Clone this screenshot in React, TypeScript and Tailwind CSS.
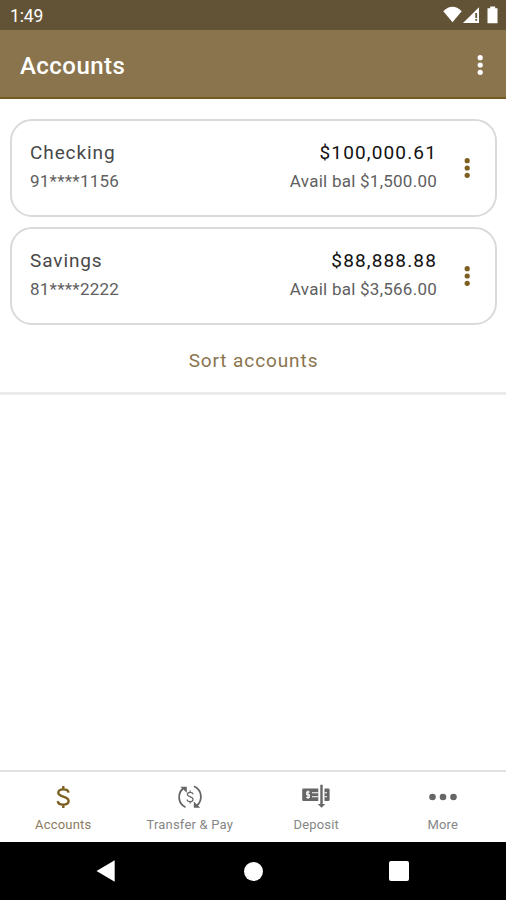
import type { ReactNode } from 'react'

interface Account {
  name: string
  number: string
  balance: string
  available: string
}

const accounts: Account[] = [
  { name: 'Checking', number: '91****1156', balance: '$100,000.61', available: '$1,500.00' },
  { name: 'Savings', number: '81****2222', balance: '$88,888.88', available: '$3,566.00' },
]

function MoreVertical() {
  return (
    <svg width="8" height="22" viewBox="0 0 8 22" fill="currentColor">
      <circle cx="4.2" cy="3.7" r="2.6" />
      <circle cx="4.2" cy="11" r="2.6" />
      <circle cx="4.2" cy="18.3" r="2.6" />
    </svg>
  )
}

function StatusBar() {
  return (
    <div className="flex h-[30px] items-center justify-between bg-[#625336] pl-[10px] pr-[7px] text-white">
      <span className="pt-[2px] text-[17.5px] leading-5 tracking-[-0.1px]">1:49</span>
      <svg width="56" height="20" viewBox="0 0 56 20" fill="currentColor">
        <path d="M0.3 6.2 Q9.5 -2.6 18.7 6.2 L9.5 17.3 Z" />
        <path d="M36 2.2 V18 H20 Z" />
        <path d="M32.3 8 h1.8 v5 h-1.8 z M32.3 14 h1.8 v1.8 h-1.8 z" fill="#625336" />
        <path d="M47.2 1.5 h5 v1.7 h2.3 v15 h-10 V3.2 h2.7 z" />
      </svg>
    </div>
  )
}

function AccountCard({ account }: { account: Account }) {
  return (
    <div className="flex h-[98px] rounded-[22px] border-2 border-[#dadada] pl-[18px] pr-6 pt-[18px]">
      <div className="flex-1">
        <p className="text-[19px] leading-7 tracking-[0.9px] text-[#484848]">{account.name}</p>
        <p className="text-[17px] leading-7 tracking-[0.25px] text-[#606060]">{account.number}</p>
      </div>
      <div className="text-right">
        <p className="text-[19px] leading-7 tracking-[1.15px] text-[#111]">{account.balance}</p>
        <p className="text-[17px] leading-7 tracking-[0.25px] text-[#606060]">Avail bal {account.available}</p>
      </div>
      <button className="ml-[26px] mt-[18px] h-[22px] text-[#7d5f20]">
        <MoreVertical />
      </button>
    </div>
  )
}

function TransferIcon() {
  return (
    <svg width="26" height="26" viewBox="0 0 26 26" fill="none" stroke="currentColor" strokeWidth="1.8">
      <path d="M8.5 23.3 C0.8 19.5 0.2 9.5 6 4.5" />
      <path d="M3.4 2.8 H9.8 V8.8 Z" fill="currentColor" stroke="none" />
      <path d="M17 2.2 C25.4 6.2 25.8 16 20 21.5" />
      <path d="M16.8 17.5 V23.8 H23.2 Z" fill="currentColor" stroke="none" />
      <path d="M16 10.3 C15.8 7.6 10.3 7.6 10.3 10.4 C10.3 13 16 12.3 16 15.4 C16 18.4 10.2 18.3 10.1 15.5 M13.1 6.5 V8.2 M13.1 17.7 V19.5" strokeWidth="1.2" />
    </svg>
  )
}

function DepositIcon() {
  return (
    <svg width="28" height="26" viewBox="0 0 28 26" fill="currentColor">
      <path d="M1.5 4.5 H16.3 V17 H1.5 Q0.2 17 0.2 15.7 V5.8 Q0.2 4.5 1.5 4.5 Z" />
      <path d="M22.5 4.5 H26.3 Q27.6 4.5 27.6 5.8 V15.7 Q27.6 17 26.3 17 H22.5 Z" />
      <path d="M7.8 8 H4.7 V10.7 H7.3 V13.5 H4.2 M6 6.6 V14.9 M10 8.7 H16.3 M10 12.8 H16.3 M22.5 8.7 H25 M22.5 12.8 H25" stroke="white" strokeWidth="1.1" fill="none" />
      <path d="M18.3 0.8 H20.7 V20 H23.2 L19.5 23.8 L15.8 20 H18.3 Z" />
    </svg>
  )
}

function NavItem({ label, active, children }: { label: string; active?: boolean; children: ReactNode }) {
  return (
    <button className={`flex flex-1 flex-col items-center pt-3 ${active ? 'text-[#7d5f20]' : 'text-[#666]'}`}>
      <span className="flex h-[26px] items-center">{children}</span>
      <span className={`mt-[7px] text-[13px] leading-4 tracking-[0.2px] ${active ? 'text-[#8b7b60]' : 'text-[#868686]'}`}>
        {label}
      </span>
    </button>
  )
}

export default function App() {
  return (
    <div className="flex h-[900px] w-full flex-col bg-white font-['Roboto',sans-serif]">
      <StatusBar />
      <header className="flex h-[69px] items-center justify-between border-b-2 border-[#745b20] bg-[#8a744e] pl-5 pr-[22px] pt-[2px] text-white">
        <h1 className="pt-[2px] text-2xl font-medium tracking-[0.45px]">Accounts</h1>
        <MoreVertical />
      </header>

      <main className="flex-1">
        <section className="h-[296px] border-b-[3px] border-[#ebebeb] pl-[10px] pr-[9px] pt-5">
          <div className="flex flex-col gap-[10px]">
            {accounts.map((account) => (
              <AccountCard key={account.name} account={account} />
            ))}
          </div>
          <button className="mt-[22px] w-full text-center text-[19px] leading-7 tracking-[0.9px] text-[#8a744e]">
            Sort accounts
          </button>
        </section>
      </main>

      <nav className="flex h-[72px] border-t-2 border-[#e2e2e2]">
        <NavItem label="Accounts" active>
          <svg width="14" height="24" viewBox="0 0 14 24" fill="none" stroke="currentColor" strokeWidth="2.4">
            <path d="M12.5 7.7 C12.2 3.2 2.3 3.2 2.3 7.8 C2.3 12.5 12.6 10.7 12.6 16 C12.6 20.8 2.1 20.8 1.8 16.2 M7.3 1 V4.5 M7.3 19.5 V23" />
          </svg>
        </NavItem>
        <NavItem label="Transfer &amp; Pay">
          <TransferIcon />
        </NavItem>
        <NavItem label="Deposit">
          <DepositIcon />
        </NavItem>
        <NavItem label="More">
          <svg width="28" height="8" viewBox="0 0 28 8" fill="currentColor">
            <circle cx="3.5" cy="4" r="3.3" />
            <circle cx="14" cy="4" r="3.3" />
            <circle cx="24.5" cy="4" r="3.3" />
          </svg>
        </NavItem>
      </nav>

      <footer className="flex h-[58px] items-center justify-between bg-black pl-[96px] pr-[97px] text-white">
        <svg width="19" height="22" viewBox="0 0 19 22" fill="currentColor">
          <path d="M0.5 11 L18.7 0.3 V21.7 Z" />
        </svg>
        <div className="ml-[2px] size-[19px] rounded-full bg-white" />
        <div className="size-5 rounded-[2px] bg-white" />
      </footer>
    </div>
  )
}
